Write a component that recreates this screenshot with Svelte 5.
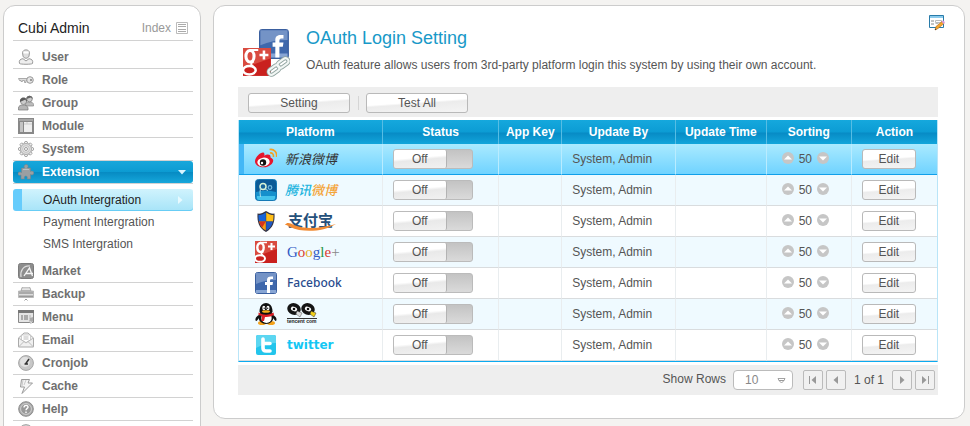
<script>
  const before = ['User', 'Role', 'Group', 'Module', 'System'];
  const after = ['Market', 'Backup', 'Menu', 'Email', 'Cronjob', 'Cache', 'Help', ''];
  const subItems = ['OAuth Intergration', 'Payment Intergration', 'SMS Intergration'];
  const platforms = ['weibo', 'tencent', 'alipay', 'google', 'facebook', 'qq', 'twitter'];
  const columns = [
    { name: 'Platform', width: 20.6 },
    { name: 'Status', width: 16.7 },
    { name: 'App Key', width: 9 },
    { name: 'Update By', width: 16.3 },
    { name: 'Update Time', width: 13 },
    { name: 'Sorting', width: 12.2 },
    { name: 'Action', width: 12.2 }
  ];
  let rows = $state('10');
</script>

{#snippet menuIcon(name)}
  <svg class="icon" width="16" height="16" viewBox="0 0 16 16" aria-hidden="true">
    {#if name === 'User'}
      <path d="M1.5 14.5c-.8-3 .5-4.400 3.500-4.800L8 12l3-2.300c3 .4 4.300 1.800 3.500 4.800-1 1-12 1-13 0z" fill="#eee" stroke="#999" />
      <path d="M4.500 3.500C5 0 11 0 11.500 3.500L11 7c-.8 3-5.200 3-6 0z" fill="#ddd" stroke="#999" />
      <path d="M5.500 3.500h5" stroke="#fff" stroke-width="2" />
    {:else if name === 'Role'}
      <path d="M.5 6.500h10v2H8v2H6.500v-2H4.500v1H3v-1H1.500z" fill="#ddd" stroke="#999" stroke-width=".8" />
      <circle cx="12" cy="8" r="3.300" fill="#e5e5e5" stroke="#999" />
      <circle cx="13" cy="8" r="1.100" fill="#888" />
    {:else if name === 'Group'}
      <path d="M7 11c0-3 1-4 3-4h3c2 .5 3 2 2.500 4z" fill="#bbb" stroke="#888" stroke-width=".7" />
      <circle cx="11.500" cy="4" r="2.800" fill="#ccc" stroke="#777" stroke-width=".7" />
      <path d="M8.300 4C8-.5 15-.5 14.700 4L13 2.500z" fill="#666" />
      <path d="M.5 15c-.5-3 .5-4.500 3-5h3c2.500.5 4 2 3.500 5z" fill="#b5b5b5" stroke="#777" stroke-width=".7" />
      <circle cx="5.500" cy="6.500" r="3" fill="#ccc" stroke="#777" stroke-width=".7" />
      <path d="M2 7C1 1 10 1 9 7L7.500 4.500z" fill="#5b5b5b" />
    {:else if name === 'Module'}
      <path d="M0 0h16v16H0z" fill="#888" />
      <path d="M2 4h3v10H2z" fill="#c3c3c3" /><path d="M6 4h8v10H6z" fill="#eee" />
      <path d="M1 1h14v2H1z" fill="#a7a7a7" /><path d="M6 6h8M9 4v2" stroke="#ccc" />
    {:else if name === 'System'}
      <g transform="translate(8 8)">
        {#each [0, 45, 90, 135, 180, 225, 270, 315] as a}
          <path d="M-2-5.500L-1-7.500H1L2-5.500" transform="rotate({a})" fill="#eee" stroke="#999" stroke-width=".8" />
        {/each}
        <circle r="5.500" fill="#ddd" stroke="#999" stroke-width=".8" />
        <circle r="3.300" fill="#eee" stroke="#aaa" stroke-width=".6" />
        <circle r="1.500" fill="#fff" stroke="#888" stroke-width=".8" />
      </g>
    {:else if name === 'Extension'}
      <path d="M3.500 4h3c-1-2 0-3.500 1.700-3.500S10.800 2 9.500 4h3v3.500c2-1 3.300 0 3.300 1.500s-1.300 2.500-3.300 1.500V15H9c.8-2-.2-3-1.200-3s-2 1-1.200 3H3v-4c-2 .8-3 0-3-1.300S1.200 7.500 3.500 8.500z" fill="#9a9fa2" stroke="#75848b" stroke-width=".6" />
      <path d="M5 5.500h6" stroke="#b9c2c5" />
    {:else if name === 'Market'}
      <rect x=".5" y=".5" width="15" height="15" rx="2" fill="#8d8d8d" stroke="#7b7b7b" />
      <path d="M3 14C2 8 5 2.500 12 3" fill="none" stroke="#ddd" stroke-width="1.200" />
      <path d="M6 13l5.500-8 3 8M8 10.500H15" fill="none" stroke="#f5f5f5" stroke-width="1.300" />
    {:else if name === 'Backup'}
      <path d="M3 5L4 1.500h8L13 5z" fill="#ccc" stroke="#999" stroke-width=".7" />
      <path d="M4.500 2h7M4 3.500h8" stroke="#eee" stroke-width=".7" />
      <path d="M.5 5h15v6.500H.5z" fill="#bbb" stroke="#aaa" stroke-width=".7" />
      <path d="M1 7h14M1 10.500h14" stroke="#999" /><path d="M1 8.500h14" stroke="#ddd" />
      <path d="M6.500 14.500L8 13l1.500 1.500" fill="none" stroke="#999" />
    {:else if name === 'Menu'}
      <path d="M.5 1.500h15v12H.5z" fill="#e4e4e4" stroke="#888" /><path d="M0 1h16v3H0z" fill="#777" />
      <path d="M3 6h2v5H3z" fill="#aaa" /><path d="M6 6h4v5H6z" fill="#aaa" /><path d="M11 6h2v4h-2z" fill="#ccc" />
      <path d="M12 9l3-1v4l-2 3-2-2z" fill="#aaa" /><path d="M11.500 12.500l2.500 1" stroke="#fff" stroke-width=".7" />
    {:else if name === 'Email'}
      <path d="M.5 6L6 1h4l5.500 5v9H.5z" fill="#f0f0f0" stroke="#aaa" />
      <path d="M3.500 8V3h9v5L8 10.500z" fill="#fff" stroke="#bbb" stroke-width=".7" />
      <path d="M5.500 5h5M5.500 7h5" stroke="#aaa" stroke-width=".8" />
      <path d="M.5 15L6 9.500l2 1.500 2-1.500 5.500 5.500M.5 6L6 9.500M15.500 6L10 9.500" fill="none" stroke="#bbb" />
    {:else if name === 'Cronjob'}
      <circle cx="8" cy="8" r="7.400" fill="#c7c7c7" stroke="#a5a5a5" />
      <circle cx="7" cy="7" r="5" fill="#e1e1e1" />
      <path d="M11 4L7.500 9M6.500 9H10" stroke="#333" stroke-width="1.500" fill="none" />
    {:else if name === 'Cache'}
      <path d="M3.500 1.500h8L10 5h4.500L4 15.500 6.500 9H2.500z" fill="#f4f4f4" stroke="#999" />
      <path d="M5 2l-1 6M8 2l-2 5" stroke="#c9c9c9" />
    {:else if name === 'Help'}
      <circle cx="8" cy="8" r="7.300" fill="#a8a8a8" stroke="#8c8c8c" />
      <circle cx="8" cy="8" r="5.400" fill="#999" stroke="#ddd" stroke-width=".8" />
      <path d="M6 6.500c0-3 4.500-2.500 4-.2C9.800 7.500 8 7.500 8 9.300M8 10.500V12" fill="none" stroke="#fff" stroke-width="1.400" />
    {:else}
      <circle cx="8" cy="8" r="7.300" fill="#ddd" stroke="#999" />
    {/if}
  </svg>
{/snippet}

{#snippet menuItem(name)}
  <li class="item"><a href="#{name}">{@render menuIcon(name)}<span>{name}</span></a></li>
{/snippet}

{#snippet fIcon()}
  <rect x=".5" y=".5" width="21" height="21" rx="2" fill="#3f68ac" stroke="#3a5f9f" />
  <path d="M1 1h20v7Q10 8 1 12z" fill="#7493c6" />
  <path d="M1 18h20v3H1z" fill="#87a5d4" />
  <path d="M12 21v-8h-2v-3h2V8c0-3 2-4 6-3.500V7c-2-.2-3 0-3 1.500V10h3l-.5 3H15v8z" fill="#fff" />
{/snippet}

{#snippet gIcon()}
  <path d="M0 0h22v22H0z" fill="#c9211e" /><path d="M0 0h22v8L0 16z" fill="#d94b40" />
  <ellipse cx="5.500" cy="6.500" rx="3.200" ry="4.500" fill="none" stroke="#fff" stroke-width="2.400" />
  <path d="M5 1.500h7M8.500 10.500c-3 1.500-2.500 2.500-.5 4" fill="none" stroke="#fff" stroke-width="1.600" />
  <ellipse cx="5" cy="17.500" rx="5" ry="3.300" fill="none" stroke="#fff" stroke-width="2" />
  <path d="M13 5.500h7M16.500 2v7" stroke="#fff" stroke-width="2" />
{/snippet}

{#snippet platformIcon(id)}
  <svg class="brand" width="22" height="22" viewBox="0 0 22 22" aria-hidden="true">
    {#if id === 'weibo'}
      <path d="M0 14C-.5 9 7 3 9 5c.8.8.5 2 .2 2.700C12 6 16 6 15.500 9.500c5 2 2.500 7-2.500 9C8 20.500 1 19 0 14z" fill="#e6162d" />
      <ellipse cx="8.500" cy="14" rx="6.200" ry="4.400" fill="#fff" transform="rotate(-8 8.500 14)" />
      <circle cx="8" cy="14.500" r="3.200" fill="#111" /><circle cx="7" cy="15" r="1.200" fill="#fff" />
      <path d="M15 5c2-.5 4 1 3.300 4M14.500 1.500c4.500-1 8 3 7 7.500" fill="none" stroke="#f5a020" stroke-width="1.600" />
    {:else if id === 'tencent'}
      <rect x=".5" y=".5" width="21" height="21" rx="3" fill="#0b5a96" stroke="#167ab6" />
      <path d="M1 13q10-3 20 0v6q0 2-2 2H3q-2 0-2-2z" fill="#1590cc" /><path d="M2 17h18v2q0 2-2 2H4q-2 0-2-2z" fill="#45c4ec" />
      <circle cx="8" cy="7.500" r="3" fill="#17649b" stroke="#d8f4d6" stroke-width="1.500" />
      <circle cx="15" cy="8.500" r="1.800" fill="none" stroke="#74bbdf" stroke-width="1.200" />
      <path d="M5.500 9q-1 4 0 9M10 10l3 1.500" fill="none" stroke="#a7d9e7" />
    {:else if id === 'alipay'}
      <path d="M11 1C8 3 5 4 2.500 3.500 2 12 4 18 11 22c7-4 9-10 8.500-18.500C17 4 14 3 11 1z" fill="#334" />
      <path d="M10.800 2.500C8 4.500 6 5 3.500 5c0 2 0 4 .5 6.500h6.800z" fill="#1764d8" />
      <path d="M11.200 2.500C14 4.500 16 5 18.500 5c0 2 0 4-.5 6.500h-6.800z" fill="#ffbe16" />
      <path d="M4.200 11.500c1 4.500 3 7 6.600 9v-9z" fill="#f79b14" />
      <path d="M17.800 11.500c-1 4.500-3 7-6.600 9v-9z" fill="#1f58c4" />
      <path d="M4.200 11.500c.5 2.500 1.500 4.500 3 6l3.600-6z" fill="#d8331d" />
    {:else if id === 'google'}
      {@render gIcon()}
    {:else if id === 'facebook'}
      {@render fIcon()}
    {:else if id === 'qq'}
      <ellipse cx="7" cy="20" rx="4" ry="2" fill="#f5a21b" /><ellipse cx="16" cy="20" rx="4" ry="2" fill="#f5a21b" />
      <path d="M4 12C0 14 0 17 1 18c1 0 2-2 3-3M18 12c4 2 4 5 3 6-1 0-2-2-3-3" fill="#111" />
      <ellipse cx="11" cy="14" rx="7.500" ry="7" fill="#111" /><ellipse cx="11.500" cy="15" rx="5.200" ry="5" fill="#fff" />
      <path d="M4.500 9C4-3 18-3 17.500 9l-3 3h-7z" fill="#111" />
      <ellipse cx="8.800" cy="5" rx="1.500" ry="2.200" fill="#fff" /><ellipse cx="13" cy="5" rx="1.500" ry="2.200" fill="#fff" />
      <circle cx="9.200" cy="5.200" r=".7" fill="#111" /><circle cx="12.700" cy="5.200" r=".7" fill="#111" />
      <ellipse cx="11" cy="8.500" rx="4" ry="1.300" fill="#f5b01b" />
      <path d="M3.500 9.500q7.500 4.500 15 0l.5 2.500q-4.500 2.500-9 2L9 18H6.500l.5-5-3.500-1z" fill="#dc1f26" />
    {:else}
      <rect x="1" y="1" width="20" height="20" rx="2" fill="#22c5ec" /><path d="M1 3q0-2 2-2h16q2 0 2 2v6Q10 9 1 14z" fill="#5cd6f1" />
      <path d="M8 5v9q0 3 3 3h4M8 9.500h7" fill="none" stroke="#fff" stroke-width="3.600" stroke-linecap="round" />
    {/if}
  </svg>
{/snippet}

{#snippet platformName(id)}
  {#if id === 'weibo'}
    <span class="cjk">新浪微博</span>
  {:else if id === 'tencent'}
    <span class="cjk medium"><span class="cyan">腾讯</span><span class="orange">微博</span></span>
  {:else if id === 'alipay'}
    <svg width="53" height="22" viewBox="0 0 53 22">
      <text x="3" y="16" class="alipay">支付宝</text>
      <path d="M0 15c2-3 5-2 9 0 11 5 29 3 42-1-13 8-33 9-46 3-2-1.500-3.500-2-5-2z" fill="#f18a32" />
    </svg>
  {:else if id === 'google'}
    <span class="google"><i>G</i><i>o</i><i>o</i><i>g</i><i>l</i><i>e</i><i>+</i></span>
  {:else if id === 'facebook'}
    <span class="facebook">Facebook</span>
  {:else if id === 'qq'}
    <svg width="40" height="22" viewBox="0 0 40 22">
      <g fill="#fff" stroke="#151515" stroke-width="3.600">
        <ellipse cx="9" cy="6" rx="5" ry="4" transform="rotate(20 9 6)" />
        <ellipse cx="23" cy="6" rx="5" ry="4" transform="rotate(20 23 6)" />
      </g>
      <circle cx="9" cy="6" r="1.300" fill="#111" /><circle cx="23" cy="6" r="1.300" fill="#111" />
      <path d="M12 8l5 2-2 4-4-3z" fill="#ddd" stroke="#555" stroke-width=".5" />
      <path d="M26 8l5 2-2 4-4-3z" fill="#f2ce17" stroke="#333" stroke-width=".5" />
      <path d="M2 15.500h30" stroke="#333" /><text x="2" y="20" class="tencent">tencent com</text>
    </svg>
  {:else}
    <span class="twitter">twitter</span>
  {/if}
{/snippet}

{#snippet sortIcon(down)}
  <svg width="12" height="12" viewBox="0 0 12 12" aria-hidden="true">
    <circle cx="6" cy="6" r="6" fill="#c6c6c6" />
    <path d={down ? 'M2 4.500h8L6 8.500z' : 'M2 7.500h8L6 3.500z'} fill="#fff" />
  </svg>
{/snippet}

<div class="page">
  <aside class="sidebar">
    <header>
      <strong>Cubi Admin</strong>
      <a href="#index">Index
        <svg width="12" height="12" viewBox="0 0 12 12" aria-hidden="true"><path d="M.5.500h11v11H.5z" fill="#fff" stroke="#bbb" /><path d="M2 2.500h8M2 4.500h8M2 7.500h8M2 9.500h8" stroke="#aaa" /></svg>
      </a>
    </header>
    <nav>
      <ul>
        {#each before as name}{@render menuItem(name)}{/each}
        <li class="item open">
          <a href="#Extension">{@render menuIcon('Extension')}<span>Extension</span>
            <svg class="caret" width="8" height="5" viewBox="0 0 8 5" aria-hidden="true"><path d="M0 0h8L4 4.500z" fill="#d9f4ff" /></svg>
          </a>
        </li>
        <li>
          <ul class="sub">
            {#each subItems as name, i}
              <li><a href="#{name}" class:current={i === 0}>{name}
                {#if i === 0}<svg width="5" height="8" viewBox="0 0 5 8" aria-hidden="true"><path d="M0 0v8l4.500-4z" fill="#e8faff" /></svg>{/if}
              </a></li>
            {/each}
          </ul>
        </li>
        {#each after as name}{@render menuItem(name)}{/each}
      </ul>
    </nav>
  </aside>

  <main>
    <header class="intro">
      <svg width="48" height="50" viewBox="0 0 48 50" aria-hidden="true">
        <g transform="translate(17 1) scale(1.36)">{@render fIcon()}</g>
        <g transform="translate(1 20) scale(1.27)">{@render gIcon()}</g>
        <g fill="none">
          <g stroke="#8fa39f" stroke-width="4"><rect x="26" y="39" width="12" height="6" rx="3" transform="rotate(-36 32 42)" /><rect x="35" y="32" width="12" height="6" rx="3" transform="rotate(-36 41 35)" /></g>
          <g stroke="#f1f6f4" stroke-width="2.200"><rect x="26" y="39" width="12" height="6" rx="3" transform="rotate(-36 32 42)" /><rect x="35" y="32" width="12" height="6" rx="3" transform="rotate(-36 41 35)" /></g>
        </g>
      </svg>
      <div class="heading">
        <h1>OAuth Login Setting</h1>
        <p>OAuth feature allows users from 3rd-party platform login this system by using their own account.</p>
      </div>
      <button class="plain edit-page" aria-label="Edit page">
        <svg width="16" height="16" viewBox="0 0 16 16" aria-hidden="true">
          <path d="M.5.500h14v12H.5z" fill="#fff" stroke="#287ba9" /><path d="M1 1h13v2H1z" fill="#8bcbed" />
          <path d="M2 6h3M2 9h3" stroke="#888" /><path d="M6.500 5.500h6v2h-6zM6.500 8.500h3" fill="none" stroke="#bbb" />
          <path d="M6 15l1-3.500 6-5 2 2-6 5z" fill="#f5a52c" stroke="#ad6a20" stroke-width=".6" />
          <path d="M12.500 6.500l1.500-1.200 2 2L14.500 9z" fill="#d99bd8" /><path d="M6 15l.5-1.500 1 1z" fill="#222" />
        </svg>
      </button>
    </header>

    <div class="toolbar">
      <button class="btn wide">Setting</button>
      <span class="divider"></span>
      <button class="btn wide">Test All</button>
    </div>

    <table>
      <colgroup>{#each columns as c}<col style="width: {c.width}%" />{/each}</colgroup>
      <thead><tr>{#each columns as c}<th scope="col">{c.name}</th>{/each}</tr></thead>
      <tbody>
        {#each platforms as id, i}
          <tr class:selected={i === 0}>
            <td><div class="platform">{@render platformIcon(id)}{@render platformName(id)}</div></td>
            <td class="status"><button class="toggle" role="switch" aria-checked="false"><span>Off</span></button></td>
            <td></td>
            <td class="by">System, Admin</td>
            <td></td>
            <td>
              <div class="sorting">
                <button class="plain" aria-label="Move up">{@render sortIcon(false)}</button>
                <span>50</span>
                <button class="plain" aria-label="Move down">{@render sortIcon(true)}</button>
              </div>
            </td>
            <td class="action"><button class="btn">Edit</button></td>
          </tr>
        {/each}
      </tbody>
    </table>

    <footer>
      <label for="rows">Show Rows</label>
      <div class="select">
        <select id="rows" bind:value={rows}><option>10</option><option>20</option><option>50</option></select>
        <svg width="9" height="6" viewBox="0 0 9 6" aria-hidden="true"><path d="M1 .5h7L7 2.500H2zM2 2.500h5L4.500 5z" fill="#fff" stroke="#999" stroke-width=".9" /></svg>
      </div>
      <div class="pager">
        <button aria-label="First page"><svg width="8" height="8" viewBox="0 0 8 8"><path d="M0 0h1v8H0zM7 0v8L2.500 4z" /></svg></button>
        <button aria-label="Previous page"><svg width="8" height="8" viewBox="0 0 8 8"><path d="M6 0v8L1.500 4z" /></svg></button>
        <span>1 of 1</span>
        <button aria-label="Next page"><svg width="8" height="8" viewBox="0 0 8 8"><path d="M2 0v8l4.500-4z" /></svg></button>
        <button aria-label="Last page"><svg width="8" height="8" viewBox="0 0 8 8"><path d="M7 0h1v8H7zM1 0v8l4.500-4z" /></svg></button>
      </div>
    </footer>
  </main>
</div>

<style>
  :global(body) { background: #f4f3f1; }
  .page {
    box-sizing: border-box;
    display: flex;
    align-items: flex-start;
    gap: 12px;
    height: 100vh;
    padding: 5px 5px 0 3px;
    overflow: hidden;
    font: 12px/16px "Liberation Sans", Arial, sans-serif;
    color: #555;
  }
  .page * { box-sizing: border-box; }
  ul, h1, p { margin: 0; padding: 0; list-style: none; font-weight: normal; }
  a { color: inherit; text-decoration: none; }
  svg { display: block; flex: none; }
  button, select { font: inherit; color: inherit; margin: 0; }
  .sidebar, main { background: #fff; border: 1px solid #ccc; border-radius: 12px; }
  .sidebar { flex: none; width: 198px; padding: 0 7px 0 9px; }
  .sidebar header {
    display: flex;
    align-items: center;
    justify-content: space-between;
    height: 35px;
    padding: 10px 5px 0;
    border-bottom: 1px solid #d2d2d2;
  }
  .sidebar strong { font-size: 14px; font-weight: normal; color: #222; }
  .sidebar header a { display: flex; align-items: center; gap: 5px; color: #999; }
  nav { padding-top: 5px; }
  .item { height: 23px; border-bottom: 1px solid #d2d2d2; }
  .item a { display: flex; align-items: center; gap: 8px; height: 22px; padding: 0 7px 0 5px; font-weight: bold; color: #707070; }
  .item.open a { border-radius: 3px; background: linear-gradient(#17a7db, #0c9bd2 50%, #078bc3 52%, #16a7db); color: #fff; }
  .caret { margin-left: auto; }
  .sub { padding: 5px 0; }
  .sub a { display: flex; align-items: center; justify-content: space-between; height: 22px; padding: 0 10px 0 21px; border-left: 9px solid transparent; }
  .sub a.current { border-left-color: #66ccfc; border-radius: 3px; background: linear-gradient(#d0f3fd, #a7e4f8); box-shadow: inset 0 -1px #68cdf5; color: #222; }

  main { flex: 1; min-width: 0; padding: 22px 26px 23px 24px; }
  .intro { display: flex; gap: 16px; height: 59px; padding-left: 4px; }
  .heading { flex: 1; min-width: 0; }
  h1 { font-size: 18px; line-height: 20px; color: #1899c8; }
  p { margin-top: 9px; }
  .plain { display: block; padding: 0; border: 0; background: none; }
  .edit-page { align-self: flex-start; margin: -13px -7px 0 0; }
  .toolbar { display: flex; align-items: center; gap: 8px; height: 30px; padding: 2px 10px 0; margin-bottom: 3px; background: #eee; }
  .divider { width: 1px; height: 14px; margin-right: -1px; background: #d5d5d5; }
  .btn {
    height: 20px;
    width: 54px;
    padding: 0;
    border: 1px solid #b9b9b9;
    border-radius: 3px;
    background: linear-gradient(176deg, #fff 46%, #ececec 54%, #f4f4f4);
    line-height: 16px;
  }
  .btn.wide { width: 102px; }
  table { width: 100%; table-layout: fixed; border-spacing: 0; border: 1px solid #b9e5f8; border-top: 0; border-bottom-color: #0caaf0; }
  th {
    height: 24px;
    padding: 0;
    border-right: 1px solid #56bde4;
    background: linear-gradient(#15a8dd, #0c9cd4 50%, #078bc5 54%, #12a5db);
    color: #fff;
  }
  td { height: 31px; padding: 0; border-right: 1px solid #e9edef; border-bottom: 1px solid #d9dcde; }
  th:last-child, td:last-child { border-right: 0; }
  tbody tr:nth-child(even) td { background: #effaff; }
  tbody tr.selected td { background: linear-gradient(#aaeaff, #70d3ff); border-right-color: #b9ecff; border-bottom-color: #109fe9; }
  tbody tr.selected td:first-child { box-shadow: inset 5px 0 #43b7f6; }
  .platform { display: flex; align-items: center; gap: 8px; height: 22px; padding-left: 16px; }
  .status { padding-left: 10px; }
  .toggle { display: block; width: 80px; height: 20px; padding: 0; border: 1px solid #bbb; border-radius: 3px; background: linear-gradient(#c3c3c3, #dadada); text-align: left; }
  .toggle span { display: block; width: 53px; height: 18px; border-right: 1px solid #b3b3b3; border-radius: 2px; background: linear-gradient(175deg, #fff 42%, #e9e9e9 54%, #f1f1f1); line-height: 18px; text-align: center; }
  .by { padding-left: 10px; }
  .sorting { display: flex; align-items: center; gap: 5px; padding-left: 15px; }
  .sorting .plain { margin-top: -2px; }
  .action { padding-left: 10px; }
  .action .btn { display: block; }

  .cjk { font: italic 13px/18px "Noto Sans CJK SC", sans-serif; color: #333; }
  .medium { font-weight: 500; }
  .cyan { color: #22b4de; }
  .orange { color: #f4a53b; }
  .alipay { font: bold 15px "Noto Sans CJK SC", sans-serif; fill: #25507a; }
  .google { padding-left: 2px; font: 15px/20px "Liberation Serif", serif; }
  .google i { font-style: normal; color: #3159c5; }
  .google i:nth-child(2), .google i:nth-child(6) { color: #d83c31; }
  .google i:nth-child(3) { color: #e6af24; }
  .google i:nth-child(5) { color: #269548; }
  .google i:last-child { color: #888; }
  .facebook { padding-left: 2px; font: 500 12px/18px "Noto Sans", sans-serif; color: #294b8d; }
  .tencent { font: bold 5px "Liberation Sans", sans-serif; fill: #222; }
  .twitter { padding-left: 2px; font: bold 12px/18px "DejaVu Sans", sans-serif; color: #13c7f4; }

  footer { display: flex; align-items: center; justify-content: flex-end; height: 30px; margin-top: 3px; padding: 0 3px; background: #eee; }
  label { margin-right: 7px; padding-bottom: 3px; }
  .select { position: relative; width: 60px; height: 20px; margin-right: 10px; }
  select { appearance: none; width: 100%; height: 20px; padding: 0 11px; border: 1px solid #bbb; border-radius: 4px; background: #fff; color: #888; }
  .select svg { position: absolute; right: 7px; top: 8px; pointer-events: none; }
  .pager { display: flex; align-items: center; gap: 3px; }
  .pager span { padding: 0 5px; }
  .pager button { display: flex; align-items: center; justify-content: center; width: 20px; height: 20px; padding: 0; border: 1px solid #bbb; border-radius: 2px; background: #f1f1f1; }
  .pager path { fill: #999; }
</style>
